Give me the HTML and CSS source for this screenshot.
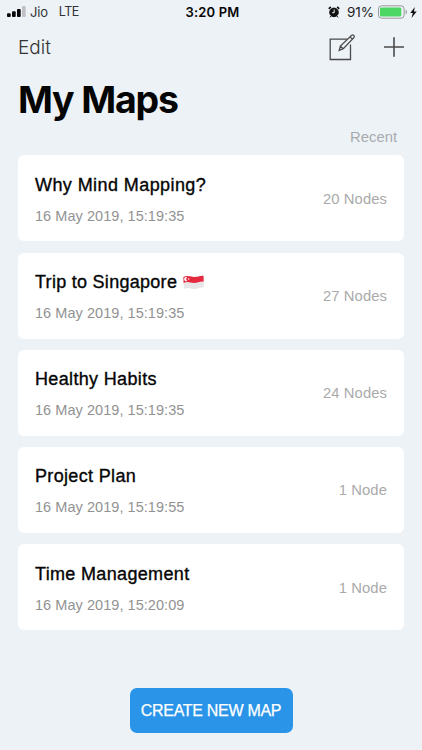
FILE: index.html
```html
<!DOCTYPE html>
<html lang="en">
<head>
<meta charset="utf-8">
<title>My Maps</title>
<link rel="stylesheet" href="styles.css">
</head>
<body>
<div class="status">
  <div class="status-left">
    <svg class="signal" width="19" height="12" viewBox="0 0 19 12"><rect x="0" y="7.2" width="3.7" height="3.8" rx="1"/><rect x="5" y="5.2" width="3.7" height="5.8" rx="1"/><rect x="10" y="3" width="3.7" height="8" rx="1"/><rect class="dim" x="15" y="0" width="3.7" height="11" rx="1"/></svg>
    <span class="carrier">Jio</span><span class="network">LTE</span>
  </div>
  <span class="clock">3:20 PM</span>
  <div class="status-right">
    <svg class="alarm" width="12" height="12" viewBox="0 0 12 12"><circle cx="6" cy="6.4" r="4.3"/><path class="ears" d="M.8 2.8 2.8.9M11.2 2.8 9.2.9"/><path class="feet" d="M3 10l-1 1.3M9 10l1 1.3"/><path class="hands" d="M6.2 3.6v3.1H4.1"/></svg>
    <span class="percent">91%</span>
    <svg class="battery" width="30" height="14" viewBox="0 0 30 14"><rect class="shell" x=".5" y=".8" width="25.6" height="12.4" rx="3"/><rect class="charge" x="2" y="2.4" width="21.3" height="9.2" rx="1.3"/><path class="tip" d="M27.6 4.7c1.8.6 1.8 4 0 4.6z"/></svg>
    <svg class="bolt" width="7" height="11" viewBox="0 0 7 11"><path d="M4.8 0 .3 6h2.5L1.5 11 6.7 4.500H3.900z"/></svg>
  </div>
</div>
<nav class="toolbar">
  <span class="edit">Edit</span>
  <div class="actions">
    <svg width="27" height="28" viewBox="0 0 27 28"><path d="M18.200 6.200H1.200v20.300h20.300V11.400"/><path d="M10.200 17.400l1.200-4.400L22.700 2.200c1.500-.8 3.100.8 2.400 2.300L14.300 15.600zM11.500 13.100l2.600 2.500M21 3.900l2.600 2.500"/></svg>
    <svg width="20" height="28" viewBox="0 0 20 28"><path class="plus" d="M10 4.200v19.600M0 14h20"/></svg>
  </div>
</nav>
<h1>My Maps</h1>
<div class="sort">Recent</div>
<main class="maps">
  <article class="card"><div><h2 class="t1">Why Mind Mapping?</h2><p>16 May 2019, 15:19:35</p></div><span class="nodes">20 Nodes</span></article>
  <article class="card"><div><h2 class="t2">Trip to Singapore<svg class="flag" width="21" height="15" viewBox="0 0 21 15"><path class="white" d="M.4 2.1C5-.1 8 2.1 11.500 2S17.500.3 20.500.7L20.800 12.600C17 12 14.500 14 11 14S5 12 .8 14z"/><path class="red" d="M.4 2.100C5-.1 8 2.100 11.500 2S17.500.3 20.500.7l.2 6C17 6.200 14.500 8 11 8S5 6 .6 8z"/><path class="moon" d="M4.300 2.300a2.100 2.100 0 1 0 0 3.600 2 2 0 0 1 0-3.600z"/><circle class="star" cx="5.700" cy="4" r=".7"/></svg></h2><p>16 May 2019, 15:19:35</p></div><span class="nodes">27 Nodes</span></article>
  <article class="card"><div><h2 class="t3">Healthy Habits</h2><p>16 May 2019, 15:19:35</p></div><span class="nodes">24 Nodes</span></article>
  <article class="card"><div><h2 class="t4">Project Plan</h2><p>16 May 2019, 15:19:55</p></div><span class="nodes">1 Node</span></article>
  <article class="card"><div><h2 class="t5">Time Management</h2><p>16 May 2019, 15:20:09</p></div><span class="nodes">1 Node</span></article>
</main>
<button class="create">CREATE NEW MAP</button>
</body>
</html>
```
FILE: styles.css
```css
* { box-sizing: border-box; margin: 0; padding: 0; }
body { width: 422px; height: 750px; overflow: hidden; background: #edf2f7; font-family: "Liberation Sans", Arial, sans-serif; color: #050505; display: flex; flex-direction: column; }
svg { display: block; flex: none; }
.status { height: 24px; padding: 0 5px 0 7px; display: grid; grid-template-columns: 1fr auto 1fr; align-items: center; font: 13px/24px Inter, sans-serif; }
.status-left, .status-right { display: flex; align-items: center; }
.status-left { color: #333; }
.signal { margin-top: -1px; fill: #050505; }
.signal .dim { fill: #bfc1c5; }
.carrier { margin-left: 4px; font-size: 13px; letter-spacing: -.2px; }
.network { margin-left: 11px; font-size: 12.5px; letter-spacing: -.5px; }
.clock { font-weight: 600; font-size: 13px; letter-spacing: .2px; margin-left: 1px; }
.status-right { justify-content: flex-end; }
.alarm { fill: #111; stroke: #111; }
.alarm .ears { stroke-width: 1.7; }
.alarm .hands { fill: none; stroke: #edf2f7; stroke-width: 1; }
.percent { margin: 0 4px 0 7px; font-size: 13.5px; color: #222; }
.shell { fill: none; stroke: #999; stroke-width: 1; }
.charge { fill: #4cd663; }
.tip { fill: #999; }
.bolt { margin-left: 2px; fill: #111; }
.toolbar { height: 46px; padding: 0 18px; display: flex; justify-content: space-between; align-items: center; }
.edit { font: 300 19px/46px Inter, sans-serif; color: #333; padding-top: 2px; }
.actions { display: flex; gap: 28px; fill: none; stroke: #4a4a4a; stroke-width: 1.3; }
.plus { stroke-width: 1.6; }
h1 { margin-left: 18px; height: 58px; font: 700 37.5px/60px Inter, sans-serif; letter-spacing: -1.2px; }
.sort { height: 27px; padding-right: 25px; text-align: right; font-size: 14.8px; line-height: 18px; color: #a8abae; }
.maps { display: flex; flex-direction: column; gap: 11.2px; margin: .4px 18px 0; }
.card { height: 86px; padding: 0 17px; border-radius: 6px; background: #fff; display: flex; justify-content: space-between; align-items: center; }
h2 { display: flex; align-items: center; height: 24px; font-size: 18px; line-height: 24px; font-weight: 400; letter-spacing: .34px; -webkit-text-stroke: .35px #050505; white-space: pre; }
.t1 { letter-spacing: .42px; }
.t2 { letter-spacing: .28px; }
.card p { margin-top: 10px; font-size: 14.500px; line-height: 18px; letter-spacing: .05px; color: #929292; }
.card > div { padding-top: 1px; }
.nodes { font-size: 14.8px; color: #aaa; padding-top: 1px; letter-spacing: .08px; }
.flag { margin-left: 6px; }
.white { fill: #e7e5e8; }
.red { fill: #e5283d; }
.moon, .star { fill: #fff; }
.create { align-self: center; margin-top: 57.6px; width: 163px; height: 45px; border: 0; border-radius: 7px; background: #2994e8; color: #fff; font: 16px/45px "Liberation Sans", Arial, sans-serif; letter-spacing: -.3px; -webkit-text-stroke: .25px #fff; white-space: nowrap; }
```
